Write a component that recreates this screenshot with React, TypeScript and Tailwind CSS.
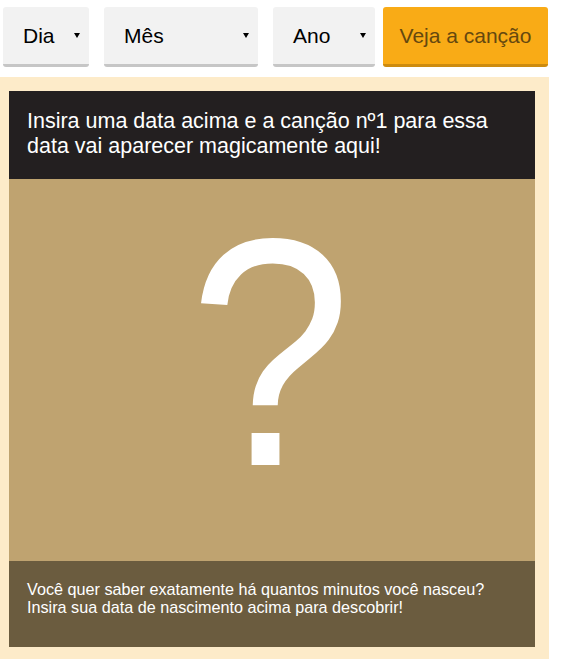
const Caret = () => (
  <span className="inline-block w-0 h-0 border-x-[3px] border-x-transparent border-t-[5px] border-t-black" />
);

const Select = ({ label, width }: { label: string; width: string }) => (
  <div
    className={`${width} h-[60px] flex items-center justify-between pl-[20px] pr-[9px] bg-[#f2f2f2] border-b-[3px] border-[#c6c6c6] rounded-[3px] text-black`}
  >
    <span>{label}</span>
    <Caret />
  </div>
);

export default function App() {
  return (
    <div className="w-[549px] font-[family-name:Liberation_Sans,Arial,sans-serif]">
      {/* date pickers + submit */}
      <div className="flex items-start pt-[7px] pl-[3px] h-[77px] text-[21px]">
        <Select label="Dia" width="w-[86px]" />
        <div className="ml-[15px]">
          <Select label="Mês" width="w-[154px]" />
        </div>
        <div className="ml-[15px]">
          <Select label="Ano" width="w-[102px]" />
        </div>
        <button className="ml-[8px] w-[165px] h-[60px] bg-[#f9ab16] border-b-[3px] border-[#cd8b0f] rounded-[3px] text-[#65480f]">
          Veja a canção
        </button>
      </div>

      {/* result card */}
      <div className="bg-[#fdebc9] pl-[9px] pr-[14px] pt-[14px] pb-[12px]">
        <div className="bg-[#231f20] text-white text-[21.5px] leading-[25px] px-[18px] pt-[18px] pb-[20px]">
          Insira uma data acima e a canção nº1 para essa data vai aparecer magicamente aqui!
        </div>
        <div className="bg-[#bfa370] h-[382px] pt-[11px] text-center text-white text-[325px] leading-none">
          <span className="inline-block scale-x-[0.9] -translate-x-[2px]">?</span>
        </div>
        <div className="bg-[#6b5c3f] text-white text-[16.2px] leading-[18px] px-[18px] pt-[19px] h-[86px]">
          Você quer saber exatamente há quantos minutos você nasceu? Insira sua data de nascimento acima para descobrir!
        </div>
      </div>
    </div>
  );
}
